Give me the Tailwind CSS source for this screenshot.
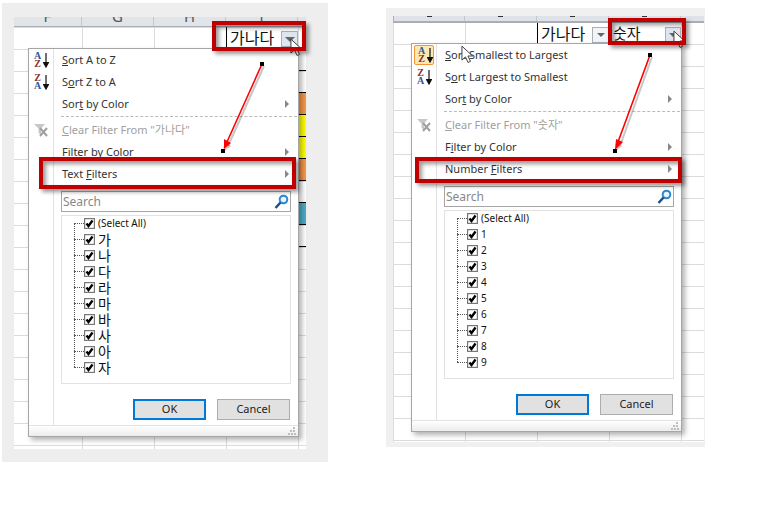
<!DOCTYPE html>
<html lang="en">
<head>
<meta charset="UTF-8">
<title>Excel filter menus</title>
<script src="https://cdn.jsdelivr.net/npm/@tailwindcss/browser@4"></script>
</head>
<body class="bg-white">
<svg width="0" height="0" class="absolute">
  <symbol id="chk" viewBox="0 0 11 11"><rect x=".6" y=".6" width="9.8" height="9.8" fill="#fff" stroke="#777" stroke-width="1.2"/><path d="M2.5 5.5 4.5 8 8.5 2.5" fill="none" stroke="#000" stroke-width="2.3"/></symbol>
  <symbol id="cursor" viewBox="0 0 14 20"><path d="M1 1V16L4.8 12.6 7.6 18.6 10.2 17.4 7.5 11.6H12.5Z" fill="#fff" stroke="#333"/></symbol>
  <symbol id="funnel" viewBox="0 0 14 13"><path d="M0 0H11L7 4.5V11L4.5 9V4.5Z" fill="#c8c8c8"/><path d="M6 4 13 12M13 4 6 12" stroke="#a0a0a0" stroke-width="2"/></symbol>
  <symbol id="glass" viewBox="0 0 15 16"><circle cx="9.5" cy="5.5" r="3.8" fill="#e8f3fb" stroke="#2f86cc" stroke-width="2"/><path d="M6.5 8.5 1.5 14" stroke="#1f4f8f" stroke-width="2.6"/></symbol>
  <symbol id="grip" viewBox="0 0 8 8"><path d="M5 0h2v2H5zM2 3h2v2H2zM5 3h2v2H5zM0 6h2v2H0zM3 6h2v2H3zM6 6h2v2H6z" fill="#bdbdbd"/></symbol>
  <symbol id="down" viewBox="0 0 6 16"><path d="M3 1V14M.5 10.5 3 15 5.5 10.5Z" stroke="#111" stroke-width="1.2" fill="#111"/></symbol>
</svg>

<div class="relative w-[773px] h-[509px] overflow-hidden bg-white font-['Noto_Sans','Noto_Sans_CJK_KR',sans-serif] text-[#333]">

  <!-- left screenshot -->
  <section class="absolute left-[2px] top-[3px] w-[326px] h-[459px] bg-[#eeeeee]">
    <div class="absolute left-[12px] top-[14px] w-[292px] h-[432px] flex flex-col bg-white">
      <div class="h-[10px] shrink-0 flex overflow-hidden bg-[#e1e4e9] border-b border-[#a9adb4] text-[#555] text-[15px] leading-[16px]">
        <div class="w-[68px] flex justify-center items-end border-r border-[#c4c7cc] pb-[2px]">F</div>
        <div class="w-[72px] flex justify-center items-end border-r border-[#c4c7cc] pb-[2px]">G</div>
        <div class="w-[72px] flex justify-center items-end border-r border-[#c4c7cc] pb-[2px]">H</div>
        <div class="w-[72px] flex justify-center items-end border-r border-[#c4c7cc] pb-[2px]">I</div>
      </div>
      <div class="relative flex-1 bg-[linear-gradient(#dcdcdc_1px,transparent_1px),linear-gradient(90deg,#dcdcdc_1px,transparent_1px)] bg-[size:72px_22px] bg-[position:68px_0]">
        <div class="absolute left-[212px] top-0 w-[73px] h-[22px] border-l border-black flex items-center pl-[3px] text-[16px] text-[#111]">가나다</div>
        <div class="absolute left-[267px] top-[4px] w-[17px] h-[16px] bg-[#dfe5ee] border border-[#a9b0ba] flex justify-center items-center"><div class="w-0 h-0 border-x-[5px] border-x-transparent border-t-[5px] border-t-[#666]"></div></div>
        <div class="absolute left-[284px] top-[22px] w-[8px] h-[198px] border-l border-black flex flex-col">
          <div class="h-[22px] border-b border-black"></div>
          <div class="h-[22px] border-b border-black"></div>
          <div class="h-[22px] bg-[#f79646] border-b border-black"></div>
          <div class="h-[22px] bg-[#ffff00] border-b border-black"></div>
          <div class="h-[22px] bg-[#ffff00] border-b border-black"></div>
          <div class="h-[22px] bg-[#f79646] border-b border-black"></div>
          <div class="h-[22px] border-b border-black"></div>
          <div class="h-[22px] bg-[#4bacc6] border-b border-black"></div>
          <div class="h-[22px] border-b border-black"></div>
        </div>
      </div>
    </div>

    <div class="absolute left-[26px] top-[45px] w-[271px] h-[389px] flex flex-col bg-white border border-[#a6a6a6] shadow-[3px_3px_5px_rgba(0,0,0,0.3)] text-[11px]">
      <div class="flex flex-1 min-h-0">
        <div class="w-[25px] shrink-0 border-r border-[#e2e2e2] flex flex-col">
          <div class="h-[22px] flex items-center pl-[4px] gap-[1px]">
            <div class="w-[9px] flex flex-col items-center font-['Liberation_Serif'] font-bold text-[10px] leading-[8px]"><span class="text-[#2f5597]">A</span><span class="text-[#8c2f2f]">Z</span></div>
            <svg class="w-[6px] h-[16px]"><use href="#down"/></svg>
          </div>
          <div class="h-[22px] flex items-center pl-[4px] gap-[1px]">
            <div class="w-[9px] flex flex-col items-center font-['Liberation_Serif'] font-bold text-[10px] leading-[8px]"><span class="text-[#8c2f2f]">Z</span><span class="text-[#2f5597]">A</span></div>
            <svg class="w-[6px] h-[16px]"><use href="#down"/></svg>
          </div>
          <div class="h-[26px]"></div>
          <div class="h-[22px] flex items-center pl-[5px]"><svg class="w-[14px] h-[13px]"><use href="#funnel"/></svg></div>
        </div>
        <div class="flex-1 flex flex-col min-w-0">
          <div class="h-[22px] flex items-center pl-[8px]"><span><u>S</u>ort A to Z</span></div>
          <div class="h-[22px] flex items-center pl-[8px]"><span>S<u>o</u>rt Z to A</span></div>
          <div class="h-[22px] flex items-center justify-between pl-[8px] pr-[9px]"><span>Sor<u>t</u> by Color</span><div class="w-0 h-0 border-y-[4px] border-y-transparent border-l-[4px] border-l-[#888]"></div></div>
          <div class="h-[4px] ml-[7px] mr-[1px] pt-[1px]"><div class="border-t border-dashed border-[#bbb]"></div></div>
          <div class="h-[22px] flex items-center pl-[8px] text-[#a0a0a0]"><span><u>C</u>lear Filter From "가나다"</span></div>
          <div class="h-[22px] flex items-center justify-between pl-[8px] pr-[9px]"><span>F<u>i</u>lter by Color</span><div class="w-0 h-0 border-y-[4px] border-y-transparent border-l-[4px] border-l-[#888]"></div></div>
          <div class="h-[22px] flex items-center justify-between pl-[8px] pr-[9px]"><span>Text <u>F</u>ilters</span><div class="w-0 h-0 border-y-[4px] border-y-transparent border-l-[4px] border-l-[#888]"></div></div>
          <div class="mt-[6px] ml-[7px] w-[230px] h-[21px] border border-[#a6a6a6] flex items-center justify-between pl-[1px] pr-[1px] text-[#888] text-[12px]"><span>Search</span><svg class="w-[15px] h-[16px]"><use href="#glass"/></svg></div>
          <div class="relative mt-[3px] ml-[7px] w-[230px] h-[169px] border border-[#e2e2e2] text-[#111]">
            <div class="absolute left-[12px] top-[7px] h-[144px] border-l border-dotted border-[#555]"></div>
            <div class="h-[16px] -mt-[1px] flex items-center pl-[12px]"><div class="w-[10px] border-t border-dotted border-[#555]"></div><svg class="w-[11px] h-[11px]"><use href="#chk"/></svg><span class="ml-[3px] text-[10px]">(Select All)</span></div>
            <div class="h-[16px] flex items-center pl-[12px]"><div class="w-[10px] border-t border-dotted border-[#555]"></div><svg class="w-[11px] h-[11px]"><use href="#chk"/></svg><span class="ml-[3px] text-[14px]">가</span></div>
            <div class="h-[16px] flex items-center pl-[12px]"><div class="w-[10px] border-t border-dotted border-[#555]"></div><svg class="w-[11px] h-[11px]"><use href="#chk"/></svg><span class="ml-[3px] text-[14px]">나</span></div>
            <div class="h-[16px] flex items-center pl-[12px]"><div class="w-[10px] border-t border-dotted border-[#555]"></div><svg class="w-[11px] h-[11px]"><use href="#chk"/></svg><span class="ml-[3px] text-[14px]">다</span></div>
            <div class="h-[16px] flex items-center pl-[12px]"><div class="w-[10px] border-t border-dotted border-[#555]"></div><svg class="w-[11px] h-[11px]"><use href="#chk"/></svg><span class="ml-[3px] text-[14px]">라</span></div>
            <div class="h-[16px] flex items-center pl-[12px]"><div class="w-[10px] border-t border-dotted border-[#555]"></div><svg class="w-[11px] h-[11px]"><use href="#chk"/></svg><span class="ml-[3px] text-[14px]">마</span></div>
            <div class="h-[16px] flex items-center pl-[12px]"><div class="w-[10px] border-t border-dotted border-[#555]"></div><svg class="w-[11px] h-[11px]"><use href="#chk"/></svg><span class="ml-[3px] text-[14px]">바</span></div>
            <div class="h-[16px] flex items-center pl-[12px]"><div class="w-[10px] border-t border-dotted border-[#555]"></div><svg class="w-[11px] h-[11px]"><use href="#chk"/></svg><span class="ml-[3px] text-[14px]">사</span></div>
            <div class="h-[16px] flex items-center pl-[12px]"><div class="w-[10px] border-t border-dotted border-[#555]"></div><svg class="w-[11px] h-[11px]"><use href="#chk"/></svg><span class="ml-[3px] text-[14px]">아</span></div>
            <div class="h-[16px] flex items-center pl-[12px]"><div class="w-[10px] border-t border-dotted border-[#555]"></div><svg class="w-[11px] h-[11px]"><use href="#chk"/></svg><span class="ml-[3px] text-[14px]">자</span></div>
          </div>
          <div class="mt-[15px] ml-[79px] flex gap-[11px] text-[#222]">
            <div class="w-[73px] h-[21px] flex items-center justify-center bg-[#e1e1e1] border-2 border-[#0078d7]">OK</div>
            <div class="w-[73px] h-[21px] flex items-center justify-center bg-[#e1e1e1] border border-[#adadad]">Cancel</div>
          </div>
        </div>
      </div>
      <div class="h-[11px] shrink-0 relative border-t border-[#e2e2e2] bg-[linear-gradient(#ffffff,#ececec)]"><svg class="absolute right-[2px] bottom-[1px] w-[8px] h-[8px]"><use href="#grip"/></svg></div>
    </div>
  </section>

  <!-- right screenshot -->
  <section class="absolute left-[386px] top-[8px] w-[319px] h-[439px] bg-[#f0f0f0]">
    <div class="absolute left-[7px] top-[8px] w-[311px] h-[426px] flex flex-col bg-white">
      <div class="h-[7px] shrink-0 flex bg-[#dfe2e8] border-b-2 border-b-[#a9adb4] border-l border-l-[#a9adb4]">
        <div class="w-[71px] flex justify-center border-r border-[#c4c7cc]"><div class="w-[5px] h-[1px] bg-[#333]"></div></div>
        <div class="w-[72px] flex justify-center border-r border-[#c4c7cc]"><div class="w-[5px] h-[1px] bg-[#333]"></div></div>
        <div class="w-[72px] flex justify-center border-r border-[#c4c7cc]"><div class="w-[5px] h-[1px] bg-[#333]"></div></div>
        <div class="w-[72px] flex justify-center border-r border-[#c4c7cc]"><div class="w-[5px] h-[1px] bg-[#333]"></div></div>
      </div>
      <div class="relative flex-1 bg-[linear-gradient(#dcdcdc_1px,transparent_1px),linear-gradient(90deg,#dcdcdc_1px,transparent_1px)] bg-[size:72px_22px] bg-[position:0_-1px]">
        <div class="absolute left-[144px] top-0 w-[72px] h-[21px] border-l border-black flex items-center pl-[3px] text-[16px] text-[#111]">가나다</div>
        <div class="absolute left-[199px] top-[4px] w-[17px] h-[16px] bg-[#f2f4f7] border border-[#a9b0ba] flex justify-center items-center"><div class="w-0 h-0 border-x-[4px] border-x-transparent border-t-[4px] border-t-[#666]"></div></div>
        <div class="absolute left-[220px] top-0 h-[21px] flex items-center text-[15px] text-[#111]">숫자</div>
        <div class="absolute left-[272px] top-[4px] w-[16px] h-[16px] bg-[#dfe5ee] border border-[#a9b0ba] flex justify-center items-center"><div class="w-0 h-0 border-x-[4px] border-x-transparent border-t-[4px] border-t-[#666]"></div></div>
        <div class="absolute left-[288px] top-[21px] h-[198px] border-l border-black"></div>
      </div>
    </div>

    <div class="absolute left-[25px] top-[35px] w-[271px] h-[389px] flex flex-col bg-white border border-[#a6a6a6] shadow-[3px_3px_5px_rgba(0,0,0,0.3)] text-[11px]">
      <div class="flex flex-1 min-h-0">
        <div class="w-[25px] shrink-0 border-r border-[#e2e2e2] flex flex-col">
          <div class="h-[22px] flex items-center">
            <div class="ml-[2px] w-[20px] h-[20px] rounded-[2px] border border-[#f29536] bg-[#fde8b4] flex items-center pl-[2px] gap-[1px]">
              <div class="w-[9px] flex flex-col items-center font-['Liberation_Serif'] font-bold text-[10px] leading-[8px]"><span class="text-[#2f5597]">A</span><span class="text-[#8c2f2f]">Z</span></div>
              <svg class="w-[6px] h-[16px]"><use href="#down"/></svg>
            </div>
          </div>
          <div class="h-[22px] flex items-center pl-[4px] gap-[1px]">
            <div class="w-[9px] flex flex-col items-center font-['Liberation_Serif'] font-bold text-[10px] leading-[8px]"><span class="text-[#8c2f2f]">Z</span><span class="text-[#2f5597]">A</span></div>
            <svg class="w-[6px] h-[16px]"><use href="#down"/></svg>
          </div>
          <div class="h-[26px]"></div>
          <div class="h-[22px] flex items-center pl-[5px]"><svg class="w-[14px] h-[13px]"><use href="#funnel"/></svg></div>
        </div>
        <div class="flex-1 flex flex-col min-w-0">
          <div class="h-[22px] flex items-center pl-[8px]"><span><u>S</u>ort Smallest to Largest</span></div>
          <div class="h-[22px] flex items-center pl-[8px]"><span>S<u>o</u>rt Largest to Smallest</span></div>
          <div class="h-[22px] flex items-center justify-between pl-[8px] pr-[9px]"><span>Sor<u>t</u> by Color</span><div class="w-0 h-0 border-y-[4px] border-y-transparent border-l-[4px] border-l-[#888]"></div></div>
          <div class="h-[4px] ml-[7px] mr-[1px] pt-[1px]"><div class="border-t border-dashed border-[#bbb]"></div></div>
          <div class="h-[22px] flex items-center pl-[8px] text-[#a0a0a0]"><span><u>C</u>lear Filter From "숫자"</span></div>
          <div class="h-[22px] flex items-center justify-between pl-[8px] pr-[9px]"><span>F<u>i</u>lter by Color</span><div class="w-0 h-0 border-y-[4px] border-y-transparent border-l-[4px] border-l-[#888]"></div></div>
          <div class="h-[22px] flex items-center justify-between pl-[8px] pr-[9px]"><span>Number <u>F</u>ilters</span><div class="w-0 h-0 border-y-[4px] border-y-transparent border-l-[4px] border-l-[#888]"></div></div>
          <div class="mt-[6px] ml-[7px] w-[230px] h-[21px] border border-[#a6a6a6] flex items-center justify-between pl-[1px] pr-[1px] text-[#888] text-[12px]"><span>Search</span><svg class="w-[15px] h-[16px]"><use href="#glass"/></svg></div>
          <div class="relative mt-[3px] ml-[7px] w-[230px] h-[169px] border border-[#e2e2e2] text-[#111]">
            <div class="absolute left-[12px] top-[7px] h-[144px] border-l border-dotted border-[#555]"></div>
            <div class="h-[16px] -mt-[1px] flex items-center pl-[12px]"><div class="w-[10px] border-t border-dotted border-[#555]"></div><svg class="w-[11px] h-[11px]"><use href="#chk"/></svg><span class="ml-[3px] text-[10px]">(Select All)</span></div>
            <div class="h-[16px] flex items-center pl-[12px]"><div class="w-[10px] border-t border-dotted border-[#555]"></div><svg class="w-[11px] h-[11px]"><use href="#chk"/></svg><span class="ml-[3px] text-[10px]">1</span></div>
            <div class="h-[16px] flex items-center pl-[12px]"><div class="w-[10px] border-t border-dotted border-[#555]"></div><svg class="w-[11px] h-[11px]"><use href="#chk"/></svg><span class="ml-[3px] text-[10px]">2</span></div>
            <div class="h-[16px] flex items-center pl-[12px]"><div class="w-[10px] border-t border-dotted border-[#555]"></div><svg class="w-[11px] h-[11px]"><use href="#chk"/></svg><span class="ml-[3px] text-[10px]">3</span></div>
            <div class="h-[16px] flex items-center pl-[12px]"><div class="w-[10px] border-t border-dotted border-[#555]"></div><svg class="w-[11px] h-[11px]"><use href="#chk"/></svg><span class="ml-[3px] text-[10px]">4</span></div>
            <div class="h-[16px] flex items-center pl-[12px]"><div class="w-[10px] border-t border-dotted border-[#555]"></div><svg class="w-[11px] h-[11px]"><use href="#chk"/></svg><span class="ml-[3px] text-[10px]">5</span></div>
            <div class="h-[16px] flex items-center pl-[12px]"><div class="w-[10px] border-t border-dotted border-[#555]"></div><svg class="w-[11px] h-[11px]"><use href="#chk"/></svg><span class="ml-[3px] text-[10px]">6</span></div>
            <div class="h-[16px] flex items-center pl-[12px]"><div class="w-[10px] border-t border-dotted border-[#555]"></div><svg class="w-[11px] h-[11px]"><use href="#chk"/></svg><span class="ml-[3px] text-[10px]">7</span></div>
            <div class="h-[16px] flex items-center pl-[12px]"><div class="w-[10px] border-t border-dotted border-[#555]"></div><svg class="w-[11px] h-[11px]"><use href="#chk"/></svg><span class="ml-[3px] text-[10px]">8</span></div>
            <div class="h-[16px] flex items-center pl-[12px]"><div class="w-[10px] border-t border-dotted border-[#555]"></div><svg class="w-[11px] h-[11px]"><use href="#chk"/></svg><span class="ml-[3px] text-[10px]">9</span></div>
          </div>
          <div class="mt-[15px] ml-[79px] flex gap-[11px] text-[#222]">
            <div class="w-[73px] h-[21px] flex items-center justify-center bg-[#e1e1e1] border-2 border-[#0078d7]">OK</div>
            <div class="w-[73px] h-[21px] flex items-center justify-center bg-[#e1e1e1] border border-[#adadad]">Cancel</div>
          </div>
        </div>
      </div>
      <div class="h-[11px] shrink-0 relative border-t border-[#e2e2e2] bg-[linear-gradient(#ffffff,#ececec)]"><svg class="absolute right-[2px] bottom-[1px] w-[8px] h-[8px]"><use href="#grip"/></svg></div>
    </div>
  </section>

  <!-- cursors -->
  <svg class="absolute left-[290px] top-[38px] w-[13px] h-[19px]"><use href="#cursor"/></svg>
  <svg class="absolute left-[673px] top-[30px] w-[13px] h-[19px]"><use href="#cursor"/></svg>
  <svg class="absolute left-[461px] top-[45px] w-[13px] h-[19px]"><use href="#cursor"/></svg>

  <!-- red callouts -->
  <div class="absolute left-[212px] top-[21px] w-[94px] h-[30px] border-4 border-[#c00000] shadow-[3px_3px_4px_rgba(0,0,0,0.4),inset_3px_3px_4px_rgba(0,0,0,0.4)]"></div>
  <div class="absolute left-[39px] top-[157px] w-[257px] h-[32px] border-4 border-[#c00000] shadow-[3px_3px_4px_rgba(0,0,0,0.4),inset_3px_3px_4px_rgba(0,0,0,0.4)]"></div>
  <div class="absolute left-[608px] top-[18px] w-[78px] h-[27px] border-4 border-[#c00000] shadow-[3px_3px_4px_rgba(0,0,0,0.4),inset_3px_3px_4px_rgba(0,0,0,0.4)]"></div>
  <div class="absolute left-[415px] top-[157px] w-[267px] h-[26px] border-4 border-[#c00000] shadow-[3px_3px_4px_rgba(0,0,0,0.4),inset_3px_3px_4px_rgba(0,0,0,0.4)]"></div>

  <!-- arrows -->
  <svg class="absolute inset-0 w-[773px] h-[509px]">
    <g fill="none" stroke="#000" stroke-opacity=".22" stroke-width="2"><path d="M264 66 228 146"/><path d="M652 57 620 146"/></g>
    <path d="M222 153 231 146 225 142Z" fill="#000" fill-opacity=".22"/>
    <path d="M614 153 622 146 616 143Z" fill="#000" fill-opacity=".22"/>
    <path d="M262 64 227 142" stroke="#f00" stroke-width="1.6"/>
    <path d="M224 149 224 139 231 143Z" fill="#f00"/>
    <path d="M650 55 618 142" stroke="#f00" stroke-width="1.6"/>
    <path d="M615 150 616 139 623 142Z" fill="#f00"/>
    <path d="M260 62h4v4h-4zM221 149h4v4h-4zM648 53h4v4h-4zM613 149h4v4h-4z" fill="#000"/>
  </svg>
</div>
</body>
</html>
